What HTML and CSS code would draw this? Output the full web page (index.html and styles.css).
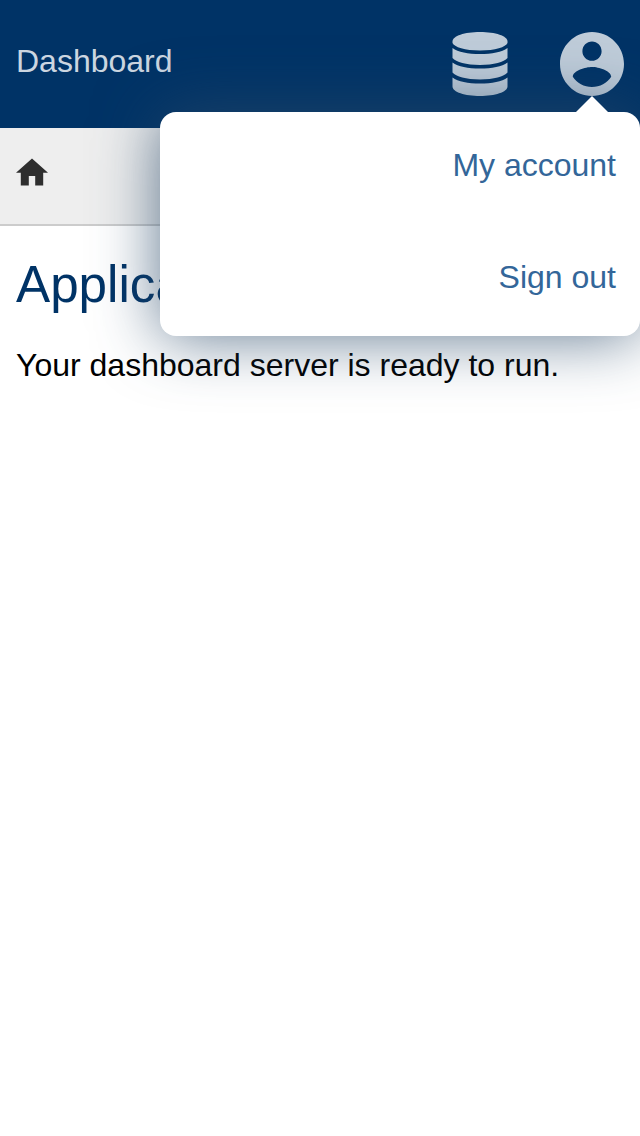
FILE: index.html
```html
<!DOCTYPE html>
<html lang="en">
<head>
<meta charset="utf-8">
<title>Dashboard</title>
<link rel="stylesheet" href="styles.css">
</head>
<body>
<header class="topbar">
  <a class="brand">Dashboard</a>
  <nav class="tools">
    <svg class="database" viewBox="0 0 56 64" fill="currentColor"><path d="M.5 9.500C.5 4 12.500 0 28 0S55.500 4 55.500 9.500V11C54 15 43 18.500 28 18.500S2 15 .5 11Z"/><path d="M.5 16C6 20 16 22 28 22S50 20 55.500 16V26C52 30 42 33 28 33S4 30 .5 26Z"/><path d="M.5 30.500C6 34.500 16 36.500 28 36.500S50 34.500 55.500 30.500V40.500C52 44.500 42 47.500 28 47.500S4 44.500 .5 40.500Z"/><path d="M.5 45.500C6 49.500 16 51.500 28 51.500S50 49.500 55.500 45.500V54.500C55.500 60 43 64 28 64S.5 60 .5 54.500Z"/></svg>
    <div class="account">
      <svg class="avatar" viewBox="2 2 20 20" fill="currentColor"><path d="M12 2C6.480 2 2 6.480 2 12s4.480 10 10 10 10-4.480 10-10S17.520 2 12 2zm0 3c1.660 0 3 1.340 3 3s-1.340 3-3 3-3-1.340-3-3 1.340-3 3-3zm0 14.200c-2.500 0-4.710-1.280-6-3.220.030-1.990 4-3.080 6-3.080 1.990 0 5.970 1.090 6 3.080-1.290 1.940-3.500 3.220-6 3.220z"/></svg>
      <div class="menu">
        <a>My account</a>
        <a>Sign out</a>
      </div>
      <span class="pointer"></span>
    </div>
  </nav>
</header>
<nav class="crumbs"><svg class="home" viewBox="2 3 20 17" fill="currentColor"><path d="M10 20v-6h4v6h5v-8h3L12 3 2 12h3v8z"/></svg></nav>
<main class="content">
  <h1>Application</h1>
  <p>Your dashboard server is ready to run.</p>
</main>
</body>
</html>
```
FILE: styles.css
```css
* { box-sizing: border-box; }
body { margin: 0; background: #fff; color: #000; font: 32px/48px "Liberation Sans", Arial, sans-serif; overflow-x: hidden; min-height: 100vh; }
.topbar { display: flex; justify-content: space-between; height: 128px; padding: 32px 16px; background: #003366; }
.brand { color: #ccd6e0; line-height: 58px; }
.tools { display: flex; gap: 52px; color: #bfccd9; }
.database { width: 56px; height: 64px; }
.account { position: relative; width: 64px; height: 64px; }
.avatar { display: block; width: 64px; height: 64px; }
.menu { position: absolute; z-index: 2; top: 80px; right: -16px; width: 480px; height: 224px; border-radius: 16px; background: #fff; box-shadow: 0 0 64px rgba(40, 72, 104, .75); display: flex; flex-direction: column; text-align: right; }
.menu a { height: 112px; padding: 0 24px; line-height: 107px; color: #336699; }
.pointer { position: absolute; z-index: 3; top: 64px; left: 16px; border: 16px solid transparent; border-top: 0; border-bottom-color: #fff; }
.crumbs { height: 98px; padding: 30px 16px; background: #eee; border-bottom: 2px solid #ccc; }
.home { display: block; width: 32px; height: 28px; color: #2e2e2e; }
.content { padding: 27px 16px; }
h1 { margin: 0; color: #003366; font-size: 51.200px; line-height: 63px; font-weight: 400; }
p { margin: 25px 0 0; }
```
